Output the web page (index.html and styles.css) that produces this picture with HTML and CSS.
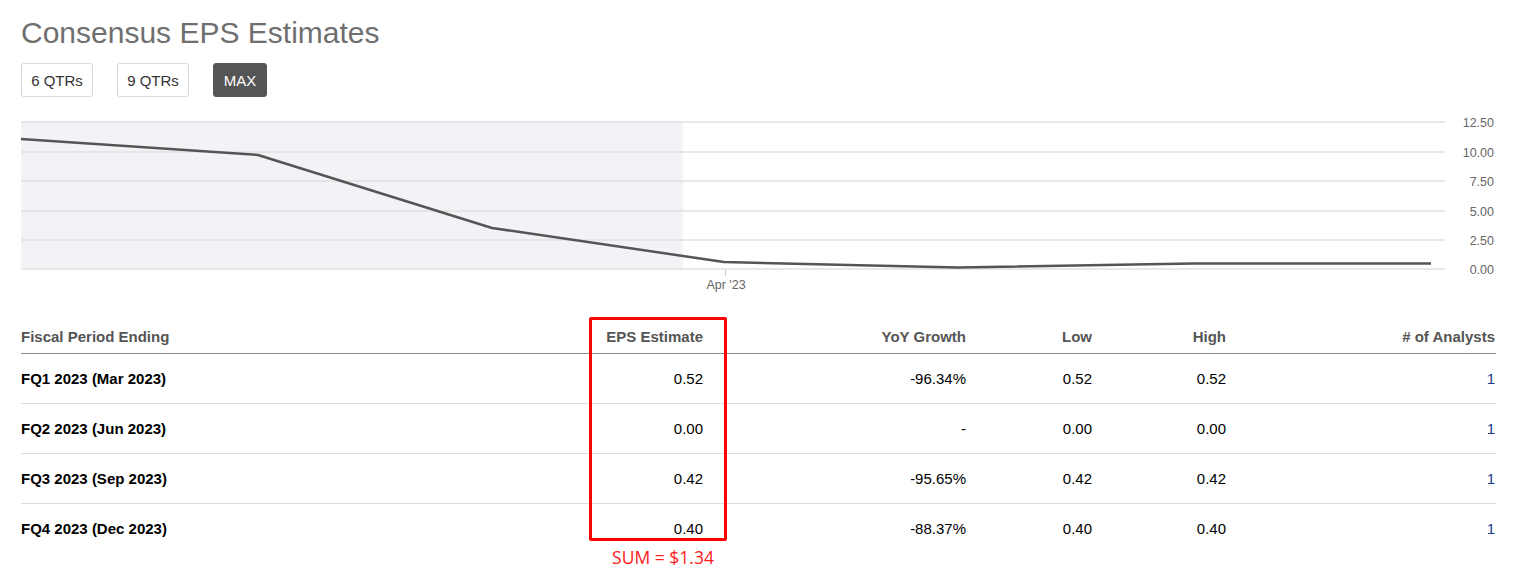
FILE: index.html
```html
<!DOCTYPE html>
<html>
<head>
<meta charset="utf-8">
<link rel="stylesheet" href="styles.css">
</head>
<body>
<div class="page">
  <h1 class="title">Consensus EPS Estimates</h1>
  <div class="btns">
    <button class="btn">6 QTRs</button>
    <button class="btn">9 QTRs</button>
    <button class="btn active">MAX</button>
  </div>
  <svg class="chart" width="1475" height="190" viewBox="0 0 1475 190">
    <rect x="0" y="12" width="662" height="147" fill="#f2f3f7"/>
    <g stroke="#e1e1e1" stroke-width="1.5">
      <line x1="0" y1="12" x2="1424" y2="12"/>
      <line x1="0" y1="42" x2="1424" y2="42"/>
      <line x1="0" y1="71" x2="1424" y2="71"/>
      <line x1="0" y1="101" x2="1424" y2="101"/>
      <line x1="0" y1="130" x2="1424" y2="130"/>
      <line x1="0" y1="159" x2="1424" y2="159"/>
    </g>
    <line x1="704.5" y1="159" x2="704.5" y2="166" stroke="#ccc" stroke-width="1"/>
    <polyline fill="none" stroke="#555" stroke-width="2.5" stroke-linejoin="round" points="0,29 237,45 471,118 703,152 937,157.5 1172,153.5 1410,153.5"/>
    <g class="ylab" text-anchor="end">
      <text x="1473" y="17">12.50</text>
      <text x="1473" y="47">10.00</text>
      <text x="1473" y="76">7.50</text>
      <text x="1473" y="106">5.00</text>
      <text x="1473" y="135">2.50</text>
      <text x="1473" y="164">0.00</text>
    </g>
    <text class="ylab" x="705" y="179" text-anchor="middle">Apr '23</text>
  </svg>
  <div class="tablewrap">
    <table class="est">
      <colgroup>
        <col class="c1"><col class="c2"><col class="c3"><col class="c4"><col class="c5"><col class="c6">
      </colgroup>
      <thead>
        <tr>
          <th class="left">Fiscal Period Ending</th>
          <th>EPS Estimate</th>
          <th>YoY Growth</th>
          <th>Low</th>
          <th>High</th>
          <th class="last">#&nbsp;of Analysts</th>
        </tr>
      </thead>
      <tbody>
        <tr>
          <td class="left period">FQ1 2023 (Mar 2023)</td>
          <td>0.52</td><td>-96.34%</td><td>0.52</td><td>0.52</td><td class="last link">1</td>
        </tr>
        <tr>
          <td class="left period">FQ2 2023 (Jun 2023)</td>
          <td>0.00</td><td>-</td><td>0.00</td><td>0.00</td><td class="last link">1</td>
        </tr>
        <tr>
          <td class="left period">FQ3 2023 (Sep 2023)</td>
          <td>0.42</td><td>-95.65%</td><td>0.42</td><td>0.42</td><td class="last link">1</td>
        </tr>
        <tr class="final">
          <td class="left period">FQ4 2023 (Dec 2023)</td>
          <td>0.40</td><td>-88.37%</td><td>0.40</td><td>0.40</td><td class="last link">1</td>
        </tr>
      </tbody>
    </table>
    <div class="redbox"></div>
    <div class="sum">SUM = $1.34</div>
  </div>
</div>
</body>
</html>
```

FILE: styles.css
```css
html, body {
  margin: 0;
  padding: 0;
  background: #fff;
}
.page {
  padding: 16px 23px 30px 21px;
  font-family: "Liberation Sans", Arial, sans-serif;
  color: #000;
}
.title {
  margin: 0;
  font-size: 30px;
  line-height: 33px;
  font-weight: normal;
  color: #6f6f6f;
}
.btns {
  display: flex;
  gap: 24px;
  margin-top: 14px;
}
.btn {
  width: 72px;
  height: 34px;
  padding: 0;
  border: 1px solid #d9d9d9;
  border-radius: 3px;
  background: #fff;
  color: #333;
  font-family: "Liberation Sans", Arial, sans-serif;
  font-size: 15px;
}
.btn.active {
  width: 54px;
  background: #555;
  border-color: #555;
  color: #fff;
}
.chart {
  display: block;
  margin-top: 13px;
}
.ylab, .ylab text {
  font-family: "Liberation Sans", Arial, sans-serif;
  font-size: 12.5px;
  fill: #666;
}
.tablewrap {
  position: relative;
  margin-top: 19px;
}
.est {
  width: 1475px;
  border-collapse: collapse;
  table-layout: fixed;
  font-size: 15px;
}
.c1 { width: 562px; }
.c2 { width: 120px; }
.c3 { width: 263px; }
.c4 { width: 126px; }
.c5 { width: 134px; }
.c6 { width: 270px; }
.est th {
  height: 34px;
  padding: 0;
  text-align: right;
  font-weight: bold;
  color: #555;
  border-bottom: 1px solid #8a8a8a;
  vertical-align: middle;
}
.est td {
  height: 49px;
  padding: 0;
  text-align: right;
  color: #000;
  border-bottom: 1px solid #dcdcdc;
  vertical-align: middle;
}
.est .final td {
  border-bottom: none;
}
.est .left {
  text-align: left;
}
.est .period {
  font-weight: bold;
}
.est .last {
  padding-right: 1px;
}
.est .link {
  color: #1b3a8c;
}
.redbox {
  position: absolute;
  left: 568px;
  top: -2px;
  width: 132px;
  height: 218px;
  border: 3.5px solid #ff0000;
  border-radius: 2px;
}
.sum {
  position: absolute;
  left: 568px;
  width: 148px;
  top: 227px;
  text-align: center;
  font-family: "Open Sans", "Noto Sans", sans-serif;
  font-size: 17.5px;
  line-height: 22px;
  color: #ff2020;
}
```
